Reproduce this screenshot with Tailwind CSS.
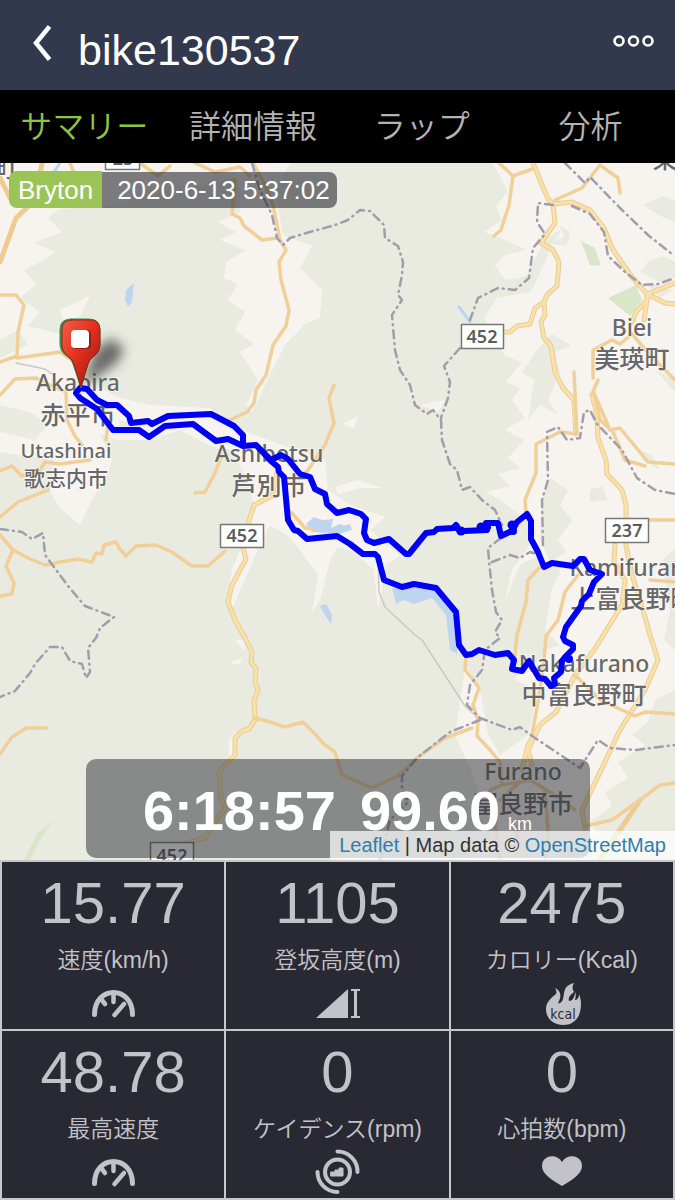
<!DOCTYPE html>
<html lang="ja">
<head>
    <meta charset="UTF-8">
    <meta name="viewport" content="width=device-width, initial-scale=1.0">
    <title>bike130537</title>
    <script src="https://cdn.jsdelivr.net/npm/@tailwindcss/browser@4"></script>
    <style>
        body {
            font-family: 'Liberation Sans', 'Noto Sans CJK JP', sans-serif;
        }
        .map-label {
            font-family: 'Noto Sans', 'Noto Sans CJK JP', sans-serif;
        }
    </style>
</head>
<body class="flex flex-col min-h-screen bg-black text-white">
    <!-- Title bar -->
    <header class="flex items-center h-[90px] bg-[#32394d] pr-5">
        <button type="button" aria-label="戻る" class="pl-8 pr-[26px] pb-1">
            <svg class="w-5 h-9" viewBox="0 0 20 36" fill="none" stroke="#fff" stroke-width="4.500"><path d="M17.500 1.500 L4 18 L17.500 34.500"/></svg>
        </button>
        <h1 class="text-[43px] leading-[50px] pt-2.5">bike130537</h1>
        <button type="button" aria-label="メニュー" class="ml-auto pb-2">
            <svg class="w-[42px] h-3" viewBox="0 0 42 12" fill="none" stroke="#fff" stroke-width="2.600"><circle cx="6" cy="6" r="4.500"/><circle cx="20.500" cy="6" r="4.500"/><circle cx="35" cy="6" r="4.500"/></svg>
        </button>
    </header>

    <!-- Tabs -->
    <nav class="grid grid-cols-4 h-[73px] items-center text-center text-[32px] leading-[48px] font-[350] text-[#b4b4b4]">
        <a href="#summary" class="text-[#8fc443]">サマリー</a>
        <a href="#detail">詳細情報</a>
        <a href="#lap">ラップ</a>
        <a href="#analysis">分析</a>
    </nav>

    <!-- Map -->
    <section class="relative flex-1 min-h-[600px] overflow-hidden bg-[#e9ebe0]">
        <svg class="absolute inset-0 w-full h-full" viewBox="0 163 675 697" preserveAspectRatio="xMidYMid slice" fill="none" stroke-linejoin="round" stroke-linecap="round">
            <defs>
                <linearGradient id="pin" x1="0" y1="0" x2="1" y2="1">
                    <stop offset="0" stop-color="#f0604a"/><stop offset=".45" stop-color="#e5301f"/><stop offset="1" stop-color="#8f1710"/>
                </linearGradient>
                <filter id="soft" x="-60%" y="-60%" width="220%" height="220%"><feGaussianBlur stdDeviation="6"/></filter>
            </defs>

            <!-- Open land -->
            <g fill="#f7f4ef">
                <path d="M0 163 H250 L245 176 L225 180 L205 186 L150 188 L120 205 L60 209 L48 218 L62 232 L33 243 L56 252 L40 262 L24 270 L36 284 L20 298 L40 312 L28 326 L60 334 L62 350 L70 358 L92 384 L120 398 L150 405 L210 408 L246 432 L285 446 L325 460 L328 490 L350 505 L385 517 L370 530 L388 545 L400 556 L385 565 L382 590 L378 610 L374 570 L355 552 L338 547 L330 560 L320 600 L312 612 L318 575 L300 550 L288 536 L270 525 L262 540 L250 568 L240 590 L232 610 L226 600 L232 570 L240 550 L254 508 L248 480 L232 450 L210 446 L180 430 L150 440 L118 440 L100 434 L112 460 L105 480 L92 500 L80 525 L60 508 L50 492 L54 460 L20 455 L0 452 Z"/>
                <path d="M225 163 H290 L275 190 L283 235 L312 246 L300 268 L322 290 L320 318 L305 324 L285 345 L272 370 L262 392 L252 412 L246 405 L258 380 L240 352 L254 344 L235 330 L245 312 L228 300 L238 284 L224 278 L226 262 L246 250 L220 240 L236 232 L218 222 L240 212 L240 190 Z"/>
                <path d="M493 163 H675 V860 H470 L500 825 L482 800 L470 768 L455 735 L462 690 L465 665 L480 690 L488 735 L500 755 L528 735 L538 690 L515 680 L530 640 L528 615 L540 590 L560 575 L540 555 L520 565 L505 600 L512 570 L530 545 L528 520 L500 500 L486 492 L510 486 L498 474 L520 468 L508 458 L524 440 L505 430 L525 418 L512 400 L520 388 L506 382 L522 362 L505 356 L484 318 L497 298 L530 292 L536 270 L520 278 L505 280 L495 265 L505 255 L527 250 L505 240 L484 232 L502 220 L496 206 L508 192 Z"/>
                <path d="M335 487 L358 480 L382 488 L360 488 L338 494 Z M342 424 L358 416 L354 428 Z M420 405 L445 400 L438 412 Z M60 310 L90 296 L80 316 L64 322 Z M235 640 L243 640 L246 652 Z M229 663 L242 658 L240 665 Z M229 742 L236 730 V760 L229 758 Z"/>
            </g>

            <!-- Woodland inside the open land -->
            <g fill="#e9ebe0">
                <path d="M675 690 L655 700 L648 722 L632 735 L645 745 L618 762 L628 778 L605 792 L612 806 L590 822 L600 836 L560 850 L560 860 H675 Z"/>
                <path d="M550 478 L568 490 L560 505 L572 520 L558 540 L566 552 L550 562 L540 540 L542 500 Z"/>
                <path d="M545 240 L562 228 L556 240 L570 236 L566 246 L552 244 L545 262 L532 290 L528 272 Z"/>
                <path d="M526 560 L545 570 L562 564 L552 590 L545 630 L560 645 L546 650 L530 672 L524 640 L530 600 Z"/>
                <path d="M643 205 L662 196 L675 200 V222 L660 216 Z M650 260 L664 256 L675 262 V278 L660 282 L640 272 Z M645 282 L672 290 L660 298 Z M655 370 L675 380 V392 Z"/>
                <path d="M537 350 L552 334 L572 346 L555 352 L560 372 L548 400 L558 415 L540 405 L528 420 L534 380 L522 372 Z"/>
                <path d="M590 490 L602 486 L608 500 L590 502 Z M662 560 L675 548 V650 L664 640 L670 610 Z M640 450 L652 455 L660 470 L645 462 Z"/>
                <path d="M430 790 L470 800 L490 830 L470 850 L430 852 Z M560 225 L570 232 L566 243 Z"/>
                <path d="M118 420 L150 424 L140 428 L122 428 Z M0 405 L30 412 L48 425 L35 440 L0 432 Z M0 340 L18 330 L28 345 L0 358 Z"/>
            </g>
            <g fill="#dae6ca">
                <path d="M581 241 L595 248 L601 266 L590 265 Z M608 298 L636 285 L642 300 L630 316 Z"/>
                <path d="M24 860 L38 832 L52 822 L40 840 L30 860 Z"/>
            </g>

            <!-- Water -->
            <g fill="#bfd5ef">
                <path d="M126 290 L134 283 L132 302 L128 307 L125 300 Z"/>
                <path d="M306 524 L314 517 L322 520 L333 519 L331 528 L340 524 L352 528 L340 534 L325 533 L312 532 Z"/>
                <path d="M392 588 L435 588 L458 612 L457 654 L450 650 L446 615 L432 598 L414 604 L404 600 L396 604 Z"/>
                <path d="M320 606 L326 604 L332 615 L331 624 L325 615 Z M336 528 L350 524 L352 530 L342 533 Z"/>
            </g>
            <g stroke="#bfd5ef" stroke-width="3">
                <path d="M459 307 L470 322 M60 163 L54 172"/>
            </g>

            <!-- Railway -->
            <path stroke="#c9c9c4" stroke-width="1.500" d="M378 557 L379 592 L385 607 L415 635 L422 640 L465 706 L478 718 M16 363 L45 369 L52 374"/>

            <!-- Main roads, casing then fill -->
            <g stroke="#edcb92" stroke-width="5">
                <path d="M533 163 L548 199 L553 204 L572 202 L590 210 L604 228 L612 248 L620 260 L632 277 L647 294 L647 300 L636 312 L632 322 M553 204 L555 223 L541 243 L553 250 L559 262 L557 286 L547 295 L544 302 L535 308 L530 324 L517 326 L510 332 H500"/>
                <path d="M647 294 L675 283 M647 294 L665 303 L675 304 M647 300 L644 320"/>
                <path d="M544 302 L545 315 L541 322 L544 338 L551 346 L555 372 L563 388 L574 400 L576 434 M592 395 L597 415 L598 438 L606 460 L607 474 L622 490 L626 505 L626 545 L632 575 L640 600 L650 635 L658 660 L645 690 L620 730 L582 810 L585 828"/>
                <path d="M246 640 L252 652 L251 663 L256 668 L255 682 L258 690 L254 700 L255 720 L249 729 L242 731 L235 738 V755 L219 771 L221 798 L225 808 L215 822 L205 838 L190 842 L185 860"/>
                <path d="M278 468 L272 496 L254 505 L248 524 M243 548 L246 559 L232 585 L228 602 L235 620 L246 640"/>
                <path d="M615 545 L614 562 L625 580 L622 605 L594 650 L575 675 L556 712 L540 725 L528 745 L522 770 M540 725 L528 750 L532 765"/>
                <path d="M600 860 L640 800 M0 178 L10 198 M42 163 L35 200 L16 218 L0 262"/>
            </g>
            <g stroke="#f7e2aa" stroke-width="3">
                <path d="M533 163 L548 199 L553 204 L572 202 L590 210 L604 228 L612 248 L620 260 L632 277 L647 294 L647 300 L636 312 L632 322 M553 204 L555 223 L541 243 L553 250 L559 262 L557 286 L547 295 L544 302 L535 308 L530 324 L517 326 L510 332 H500"/>
                <path d="M647 294 L675 283 M647 294 L665 303 L675 304 M647 300 L644 320"/>
                <path d="M544 302 L545 315 L541 322 L544 338 L551 346 L555 372 L563 388 L574 400 L576 434 M592 395 L597 415 L598 438 L606 460 L607 474 L622 490 L626 505 L626 545 L632 575 L640 600 L650 635 L658 660 L645 690 L620 730 L582 810 L585 828"/>
                <path d="M246 640 L252 652 L251 663 L256 668 L255 682 L258 690 L254 700 L255 720 L249 729 L242 731 L235 738 V755 L219 771 L221 798 L225 808 L215 822 L205 838 L190 842 L185 860"/>
                <path d="M278 468 L272 496 L254 505 L248 524 M243 548 L246 559 L232 585 L228 602 L235 620 L246 640"/>
                <path d="M615 545 L614 562 L625 580 L622 605 L594 650 L575 675 L556 712 L540 725 L528 745 L522 770 M540 725 L528 750 L532 765"/>
            </g>

            <!-- Local roads -->
            <g stroke="#f1cf98" stroke-width="3.500">
                <path d="M70 163 L78 184 M140 163 L158 176 L170 166 M195 163 L215 172 L240 167 L250 176 M253 163 L265 185 L273 205 L280 240 L286 250 L279 262 L281 280 L289 310 L286 326 L273 345 L266 375 L256 390 L254 403 L247 412 L230 420"/>
                <path d="M235 180 L232 214 L240 218 L244 226 L262 240 L277 238"/>
                <path d="M334 385 L329 398 L334 423 L325 445 L308 470 L300 478"/>
                <path d="M0 295 L16 295 L24 305 L18 332 L17 356 L0 362 M17 358 L60 352 L72 360 M0 395 L15 379 L36 378 L48 384 L66 392 L67 420 L75 436 L82 445"/>
                <path d="M0 471 L12 466 L22 476 L40 470 L45 462 L60 464 L90 460 M0 517 L18 502 L48 490 M108 424 L106 440"/>
                <path d="M0 535 L13 550 L28 558 L45 565 L60 562 L78 559 L92 562 L96 553 L102 554 L104 545 L116 542 L119 548 L126 556 L136 546 L156 545 L172 552 L192 566 L208 566 L225 551"/>
                <path d="M13 550 L6 566 L14 583 L12 594 L0 596"/>
                <path d="M195 493 L205 492 L215 473 L222 455 M291 512 L305 528 L313 529"/>
                <path d="M0 754 L12 737 L26 728 L46 728 M255 718 L270 722 L285 727 L303 722 L313 732 L325 745 L335 752 L342 775 L372 788 L398 776 L418 757 L445 738 L472 728"/>
                <path d="M499 163 L513 176 L532 169 M513 176 L509 205 L501 230 L494 236 M555 200 L582 188 L600 165 L618 178 L620 193"/>
                <path d="M594 393 L600 420 L613 432 L625 460 L645 466 M594 393 L610 430 L620 428 L648 462 L675 464 M650 520 H675"/>
                <path d="M574 372 L577 434 L560 432 L536 444 V473 L525 500 L526 514 M539 568 L528 580 L526 602 L517 635 L514 665 M578 575 L565 592 L558 620 L546 636 L544 660 L540 690 L532 735"/>
                <path d="M466 656 L465 670 L475 682 L479 688 L473 705 L478 720 L477 736 L490 750 L500 762 L502 785 L490 790 L500 860 M502 785 L530 780 L555 795 L575 810 M520 782 L500 800 M545 790 L548 830 L545 860 M520 820 L514 850"/>
                <path d="M575 675 L600 700 L635 716 L645 712 L675 714 M585 826 L612 820 L640 800 L660 785 L675 783"/>
                <path d="M593 378 L593 350 L612 340 L620 344 L632 334 M632 334 L650 355 L675 380 M650 580 L675 582 M598 380 L592 394"/>
            </g>

            <!-- Municipal borders -->
            <g stroke="#a19dad" stroke-width="2.500" stroke-dasharray="8 5 1 5">
                <path d="M252 163 L260 190 L272 215 L277 238 L283 245 L290 238 L310 232 L335 225 L348 220 L360 210 L370 211 L384 225 L385 238 L398 246 L403 262 L402 275 L398 295 L402 300 L392 315 L395 350 L400 370 L410 385 L415 405 L427 414 L433 410 L441 420 L442 440 L450 464 L457 470 L462 490 L470 487 L482 500 L495 510 L502 525"/>
                <path d="M565 163 L585 183 L590 177 L620 208 L648 235 L672 254"/>
                <path d="M553 205 L538 203 L537 222 L545 234 L533 248 L529 278 L515 290 L498 288 L478 298 L470 320 M460 348 L444 366 L450 382 L448 398 L441 418"/>
                <path d="M572 206 L590 214 L604 232 L608 256 L625 272 L642 285 L658 284 L675 278"/>
                <path d="M543 545 L542 500 L548 480 L547 432 L558 427 L567 440 L580 438 L584 412 L590 410 L597 424 L622 450 L637 478 L655 490 L675 494"/>
                <path d="M501 538 L488 548 L489 560 L492 590 L496 612 L502 620 L495 632 L500 638 L485 650 L482 670 L470 685 L467 705 L480 718 L512 730 L520 727 L532 736 L580 768 L598 740 L610 748 L635 750 L675 745 M492 562 L510 555 L520 558 L530 552 L540 555"/>
                <path d="M480 720 L450 732 L418 757 L402 776 L402 788 L408 802 L390 820 L380 860"/>
                <path d="M0 529 L22 532 L32 539 L43 533 L45 555 L68 586 L85 606 L114 617 L100 628 L96 638 L88 648 L90 672 L86 678 L82 664 L70 661 L62 647 L50 647 L35 664 L30 673 L15 691 L0 697"/>
            </g>

            <!-- Route shields -->
            <g fill="#fff" stroke="#777" stroke-width="1.500">
                <rect x="461.500" y="324.500" width="42" height="24"/>
                <rect x="220.500" y="524.500" width="43" height="23"/>
                <rect x="605.500" y="518.500" width="43" height="24"/>
                <rect x="150.500" y="842.500" width="43" height="24"/>
                <rect x="105.500" y="146.500" width="34" height="23"/>
            </g>
            <g class="map-label text-[18px] font-semibold" fill="#5c5c5c" text-anchor="middle">
                <text x="482" y="343">452</text>
                <text x="242" y="542">452</text>
                <text x="627" y="537">237</text>
                <text x="172" y="862">452</text>
                <text x="123" y="165">23</text>
            </g>

            <!-- Place names -->
            <g class="map-label text-[23px] font-medium" fill="#686868" stroke="#fff" stroke-opacity=".5" stroke-width="2" paint-order="stroke" text-anchor="middle">
                <text x="78" y="391">Akabira</text>
                <text x="78" y="424" class="text-[25px]">赤平市</text>
                <text x="66" y="458" class="text-[20px]">Utashinai</text>
                <text x="66" y="486" class="text-[21px]">歌志内市</text>
                <text x="269" y="462">Ashibetsu</text>
                <text x="269" y="495" class="text-[25px]">芦別市</text>
                <text x="632" y="336">Biei</text>
                <text x="632" y="368" class="text-[25px]">美瑛町</text>
                <text x="634" y="576">Kamifurano</text>
                <text x="633" y="608" class="text-[25px]">上富良野町</text>
                <text x="584" y="672">Nakafurano</text>
                <text x="584" y="704" class="text-[25px]">中富良野町</text>
                <text x="523" y="780">Furano</text>
                <text x="523" y="813" class="text-[25px]">富良野市</text>
                <text x="5" y="177" class="text-[25px]">町</text>
                <text x="665" y="168" class="text-[25px]">東</text>
            </g>

            <!-- Pin shadow -->
            <path d="M82 388 L94 352 L110 338 L124 348 L118 362 Z" fill="#333" fill-opacity=".7" filter="url(#soft)"/>

            <!-- Ridden track -->
            <path stroke="#0000f5" stroke-width="6" d="M80 388 L87 389 L97 400 L107 405 L117 405 L129 416 L131 423 L148 421 L152 424 L168 416 L211 414 L234 426 L243 435 L243 446 L256 445 L271 460 L281 455 L288 459 L300 474 L310 477 L315 489 L325 494 L327 504 L337 513 L349 510 L361 514 L366 519 L364 533 L367 540 L374 543 L389 539 L406 554 L409 554 L426 533 L434 532 L437 529 L453 528 L456 525 L460 532 L464 531 L487 530 L486 523 L498 523 L501 536 L512 531 L517 522 L527 514 L531 521 L531 539 L538 552 L544 567 L552 563 L573 566 L580 559 L584 559 L590 570 L602 574 L594 582 L589 594 L582 601 L581 606 L566 627 L563 637 L565 641 L573 645 L573 649 L565 657 L562 661 L561 672 L554 678 L555 684 L551 686 L545 679 L539 678 L529 661 L522 671 L512 669 L514 660 L508 653 L495 655 L479 650 L472 654 L466 655 L459 645 L456 612 L436 588 L414 584 L402 587 L384 580 L378 557 L375 554 L363 554 L350 544 L337 536 L307 539 L298 531 L294 530 L288 520 L284 477 L279 472 L278 467 L271 461 L256 445 L243 446 L228 439 L216 441 L193 424 L165 426 L149 437 L139 430 L113 430 L97 409 L80 398 L76 393 Z"/>
            <g fill="#0000f5">
                <circle cx="456" cy="527" r="4"/><circle cx="461" cy="531" r="4.500"/><circle cx="481" cy="527" r="4.500"/><circle cx="487" cy="527" r="4"/><circle cx="512" cy="525" r="4.500"/><circle cx="513" cy="531" r="4"/><circle cx="569" cy="659" r="4"/>
            </g>

            <!-- Finish pin -->
            <path d="M71 319 H89 Q100 319 100 330 V344 Q100 352 93 357 Q89 360 88 364 L81 388 L73 364 Q72 360 68 357 Q60 352 60 344 V330 Q60 319 71 319 Z" fill="#3c8a4a" stroke="#3c8a4a"/>
            <path d="M72 320 H90 Q100 320 100 330 V345 Q100 352 93 357 Q89 360 88 364 L81 387 L74 364 Q73 360 69 357 Q62 352 62 345 V330 Q62 320 72 320 Z" fill="url(#pin)" stroke="#9b1c12" stroke-width=".8"/>
            <rect x="72" y="330" width="19" height="19" rx="4" fill="#7c1510" fill-opacity=".7"/>
            <rect x="71" y="330" width="18" height="18" rx="4" fill="#fff"/>
        </svg>

        <!-- Device and start time -->
        <div class="absolute left-[9px] top-2 flex items-end text-[26px] leading-9">
            <span class="h-[37px] px-[9px] pt-px rounded-l-lg bg-[#9ac556]">Bryton</span>
            <time datetime="2020-06-13T05:37:02" class="h-9 pl-[15px] pr-[7px] rounded-r-lg bg-[#282932]/60">2020-6-13 5:37:02</time>
        </div>

        <!-- Ride time and distance -->
        <div class="absolute left-1/2 bottom-[2px] -translate-x-1/2 flex justify-center items-baseline w-[504px] h-[99px] pt-5 rounded-[10px] bg-[#282932]/50 font-bold text-[56px] leading-[64px]">
            <span>6:18:57</span>
            <span class="ml-6">99.60</span>
            <span class="ml-2 text-lg font-normal">km</span>
        </div>

        <div class="absolute right-0 bottom-0 px-[9px] bg-white/70 text-xl leading-[29px] text-[#333]">
            <a href="#leaflet" class="text-[#2f7fae]">Leaflet</a> | Map data © <a href="#osm" class="text-[#2f7fae]">OpenStreetMap</a>
        </div>
    </section>

    <!-- Stats -->
    <dl class="grid grid-cols-3 gap-0.5 p-0.5 bg-[#c8c7cb] text-[#c3c2c8] text-center">
        <div class="flex flex-col items-center h-[167px] pt-[9px] bg-[#282932]">
            <dd class="text-[58px] leading-[64px]">15.77</dd>
            <dt class="my-2 pt-px text-[23px] leading-8 font-[350]">速度(km/h)</dt>
            <svg class="w-12 h-10" viewBox="0 0 48 40" fill="none" stroke="#c3c2c8" stroke-width="5" stroke-linecap="round"><path d="M5.500 30.500 C5.500 1 43.500 1 43.500 30.500"/><path d="M24.500 10 V18 M12.500 15.500 L16 20 M25.500 31 L35 20" stroke-width="4.500"/></svg>
        </div>
        <div class="flex flex-col items-center h-[167px] pt-[9px] bg-[#282932]">
            <dd class="text-[58px] leading-[64px]">1105</dd>
            <dt class="my-2 pt-px text-[23px] leading-8 font-[350]">登坂高度(m)</dt>
            <svg class="w-12 h-10" viewBox="0 0 48 40" fill="#c3c2c8"><path d="M3 34 L35 5 V34 Z"/><path d="M38 5 H47 V7 H44 V32 H47 V34 H38 V32 H41 V7 H38 Z"/></svg>
        </div>
        <div class="flex flex-col items-center h-[167px] pt-[9px] bg-[#282932]">
            <dd class="text-[58px] leading-[64px]">2475</dd>
            <dt class="mt-2 mb-1.5 pt-px text-[23px] leading-8 font-[350]">カロリー(Kcal)</dt>
            <svg class="w-12 h-11" viewBox="0 0 48 44" fill="#c3c2c8">
                <path d="M36 1 C34 4 34 7 36 10 C32 13 30 15 31 19 C35 19 37 14 37 10 C38 12 38 14 37 18 C39 18 41 16 41 12 C44 20 43 25 42 30 C40 38 34 43 25 43 C15 43 8 36 8 27 C8 20 13 16 18 12 C19 10 18 8 17 6 C23 9 24 14 20 21 C22 22 24 20 25 17 C27 9 25 4 36 1 Z"/>
                <text x="25" y="37" text-anchor="middle" fill="#282932" class="text-[14px]" font-family="DejaVu Sans Condensed, Liberation Sans">kcal</text>
            </svg>
        </div>
        <div class="flex flex-col items-center h-[167px] pt-[9px] bg-[#282932]">
            <dd class="text-[58px] leading-[64px]">48.78</dd>
            <dt class="my-2 pt-px text-[23px] leading-8 font-[350]">最高速度</dt>
            <svg class="w-12 h-10" viewBox="0 0 48 40" fill="none" stroke="#c3c2c8" stroke-width="5" stroke-linecap="round"><path d="M5.500 30.500 C5.500 1 43.500 1 43.500 30.500"/><path d="M24.500 10 V18 M12.500 15.500 L16 20 M25.500 31 L35 20" stroke-width="4.500"/></svg>
        </div>
        <div class="flex flex-col items-center h-[167px] pt-[9px] bg-[#282932]">
            <dd class="text-[58px] leading-[64px]">0</dd>
            <dt class="mt-2 mb-0.5 pt-px text-[23px] leading-8 font-[350]">ケイデンス(rpm)</dt>
            <svg class="w-12 h-12" viewBox="0 0 48 48" fill="none" stroke="#c3c2c8" stroke-width="4" stroke-linecap="round"><circle cx="24.500" cy="25" r="12.500"/><path d="M24.500 4.500 A20 20 0 0 1 44.500 25 M4.500 25 A20 20 0 0 0 24.500 45"/><path d="M18 25 H22 V23 H26 V21 H30 V29 H18 Z" fill="#c3c2c8" stroke-width="1"/></svg>
        </div>
        <div class="flex flex-col items-center h-[167px] pt-[9px] bg-[#282932]">
            <dd class="text-[58px] leading-[64px]">0</dd>
            <dt class="mt-2 mb-1.5 pt-px text-[23px] leading-8 font-[350]">心拍数(bpm)</dt>
            <svg class="w-12 h-10" viewBox="0 0 48 40" fill="#c3c2c8"><path d="M24 35 C14 29 4 23 4 15 C4 4 19 2 24 11 C29 2 44 4 44 15 C44 23 34 29 24 35 Z"/></svg>
        </div>
    </dl>
</body>
</html>
